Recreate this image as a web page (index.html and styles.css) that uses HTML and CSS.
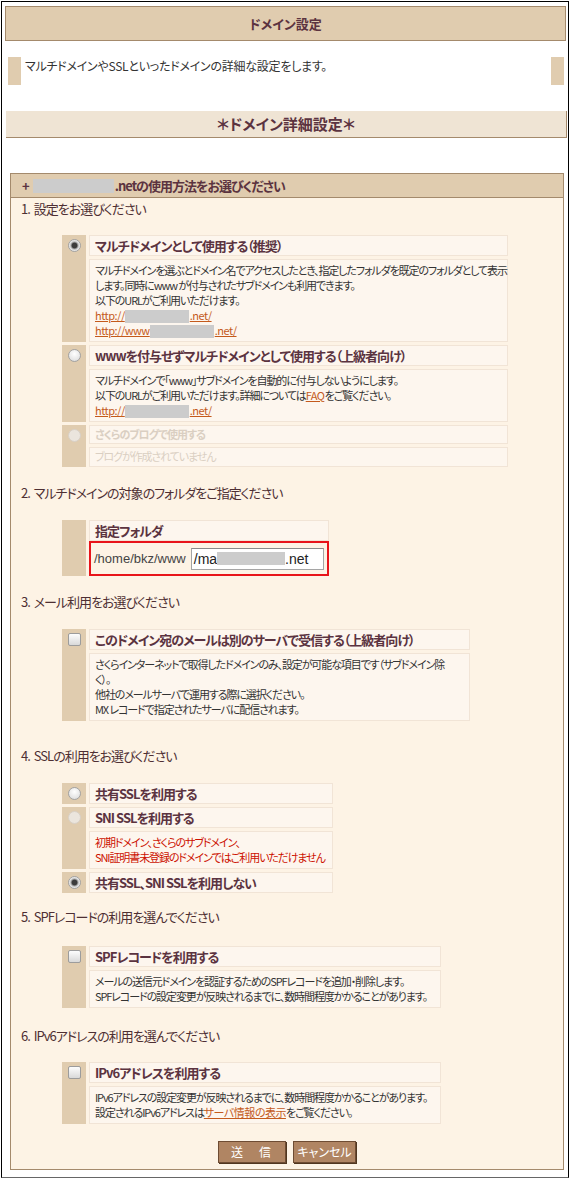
FILE: index.html
```html
<!DOCTYPE html>
<html lang="ja">
<head>
<meta charset="utf-8">
<title>ドメイン設定</title>
<link rel="stylesheet" href="styles.css">
</head>
<body>
<div class="frame">

<h1 class="page-title">ドメイン設定</h1>

<div class="intro">
	<div class="intro-mark"></div>
	<div class="intro-text">マルチドメインやSSLといったドメインの詳細な設定をします。</div>
	<div class="intro-mark"></div>
</div>

<h2 class="subtitle">＊ドメイン詳細設定＊</h2>

<div class="panel">
	<div class="panel-head">+<span class="blank blank-head"></span>.netの使用方法をお選びください</div>

	<!-- 1 -->
	<div class="sec">
		<p class="sec-title first">1. 設定をお選びください</p>
		<div class="opts opts-wide">
			<div class="opt">
				<div class="mark"><span class="radio on"></span></div>
				<div class="cells">
					<div class="ttl">マルチドメインとして使用する（推奨）</div>
					<div class="desc">マルチドメインを選ぶとドメイン名でアクセスしたとき、指定したフォルダを既定のフォルダとして表示<br>
					します。同時にwww が付与されたサブドメインも利用できます。<br>
					以下のURLがご利用いただけます。<br>
					<a href="#">http://<span class="blank blank-url"></span>.net/</a><br>
					<a href="#">http://www<span class="blank blank-url"></span>.net/</a></div>
				</div>
			</div>
			<div class="opt">
				<div class="mark"><span class="radio"></span></div>
				<div class="cells">
					<div class="ttl">wwwを付与せずマルチドメインとして使用する（上級者向け）</div>
					<div class="desc">マルチドメインで「www」サブドメインを自動的に付与しないようにします。<br>
					以下のURLがご利用いただけます。詳細については<a href="#">FAQ</a>をご覧ください。<br>
					<a href="#">http://<span class="blank blank-url"></span>.net/</a></div>
				</div>
			</div>
			<div class="opt">
				<div class="mark"><span class="radio off"></span></div>
				<div class="cells">
					<div class="ttl ttl-off">さくらのブログで使用する</div>
					<div class="desc desc-off">ブログが作成されていません</div>
				</div>
			</div>
		</div>
	</div>

	<!-- 2 -->
	<div class="sec">
		<p class="sec-title">2. マルチドメインの対象のフォルダをご指定ください</p>
		<div class="opts opts-folder">
			<div class="opt">
				<div class="mark"></div>
				<div class="cells cells-tight">
					<div class="ttl">指定フォルダ</div>
					<div class="folder">/home/bkz/www <span class="input">/ma<span class="blank blank-input"></span>.net</span></div>
				</div>
			</div>
		</div>
	</div>

	<!-- 3 -->
	<div class="sec">
		<p class="sec-title">3. メール利用をお選びください</p>
		<div class="opts opts-mail">
			<div class="opt">
				<div class="mark"><span class="check"></span></div>
				<div class="cells">
					<div class="ttl">このドメイン宛のメールは別のサーバで受信する（上級者向け）</div>
					<div class="desc">さくらインターネットで取得したドメインのみ、設定が可能な項目です（サブドメイン除<br>
					く）。<br>
					他社のメールサーバで運用する際に選択ください。<br>
					MX レコードで指定されたサーバに配信されます。</div>
				</div>
			</div>
		</div>
	</div>

	<!-- 4 -->
	<div class="sec">
		<p class="sec-title gap-wide">4. SSLの利用をお選びください</p>
		<div class="opts opts-ssl">
			<div class="opt">
				<div class="mark"><span class="radio"></span></div>
				<div class="cells">
					<div class="ttl">共有SSLを利用する</div>
				</div>
			</div>
			<div class="opt">
				<div class="mark"><span class="radio off"></span></div>
				<div class="cells">
					<div class="ttl">SNI SSLを利用する</div>
					<div class="desc desc-warn">初期ドメイン、さくらのサブドメイン、<br>
					SNI証明書未登録のドメインではご利用いただけません</div>
				</div>
			</div>
			<div class="opt">
				<div class="mark"><span class="radio on"></span></div>
				<div class="cells">
					<div class="ttl">共有SSL、SNI SSLを利用しない</div>
				</div>
			</div>
		</div>
	</div>

	<!-- 5 -->
	<div class="sec">
		<p class="sec-title gap-narrow">5. SPFレコードの利用を選んでください</p>
		<div class="opts opts-spf gap-low">
			<div class="opt">
				<div class="mark"><span class="check"></span></div>
				<div class="cells">
					<div class="ttl">SPFレコードを利用する</div>
					<div class="desc">メールの送信元ドメインを認証するためのSPFレコードを追加・削除します。<br>
					SPFレコードの設定変更が反映されるまでに、数時間程度かかることがあります。</div>
				</div>
			</div>
		</div>
	</div>

	<!-- 6 -->
	<div class="sec">
		<p class="sec-title gap-mid">6. IPv6アドレスの利用を選んでください</p>
		<div class="opts opts-spf gap-first">
			<div class="opt">
				<div class="mark"><span class="check"></span></div>
				<div class="cells">
					<div class="ttl">IPv6アドレスを利用する</div>
					<div class="desc">IPv6アドレスの設定変更が反映されるまでに、数時間程度かかることがあります。<br>
					設定されるIPv6アドレスは<a href="#">サーバ情報の表示</a>をご覧ください。</div>
				</div>
			</div>
		</div>
	</div>

	<div class="actions">
		<button class="btn btn-send">送　信</button>
		<button class="btn btn-cancel">キャンセル</button>
	</div>
</div>

</div>
</body>
</html>
```

FILE: styles.css
```css
body {
	margin: 0;
	font-family: "Noto Sans CJK JP", "Noto Sans", sans-serif;
	font-feature-settings: "palt";
	color: #333;
}
.frame {
	box-sizing: border-box;
	width: 568px;
	height: 1177px;
	margin: 1px 0 0 1px;
	padding: 4px 2px 0 3px;
	border: 1px solid #000;
	border-bottom-color: #666;
	background: #fff;
}
.page-title {
	box-sizing: border-box;
	height: 35px;
	margin: 0;
	border: 1px solid #a48a6c;
	background: #e0ccaf;
	color: #5b3340;
	font-size: 13px;
	font-weight: bold;
	line-height: 33px;
	text-align: center;
}
.intro {
	display: flex;
	height: 28px;
	margin: 16px 2px 0 3px;
	font-size: 12px;
	line-height: 16px;
	letter-spacing: -0.25px;
}
.intro-mark {
	width: 13px;
	background: #e0ccaf;
}
.intro-text {
	flex: 1;
	padding: 1px 4px;
}
.subtitle {
	box-sizing: border-box;
	height: 27px;
	margin: 26px -1px 0 1px;
	border-right: 1px solid #a48a6c;
	border-bottom: 1px solid #a48a6c;
	background: #efe4d4;
	color: #5b3340;
	font-size: 15px;
	font-weight: bold;
	line-height: 26px;
	text-align: center;
}
.panel {
	margin: 35px 2px 0 5px;
	padding-bottom: 6px;
	border: 1px solid #a48a6c;
	background: #fdf3e5;
	letter-spacing: -1px;
}
.panel-head {
	box-sizing: border-box;
	height: 24px;
	padding-left: 11px;
	border-bottom: 1px solid #a48a6c;
	background: #e0ccaf;
	color: #5b3340;
	font-size: 13px;
	font-weight: bold;
	line-height: 23px;
}
.blank {
	display: inline-block;
	background: #cccccc;
	vertical-align: middle;
}
.blank-head {
	width: 81px;
	height: 14px;
	margin: -2px 1px 0 4px;
}
.blank-url {
	width: 64px;
	height: 13px;
	margin: -2px 1px 0 0;
}
.blank-input {
	width: 68px;
	height: 13px;
	margin-top: -2px;
}
.sec {
	padding: 0 10px;
}
.sec-title {
	margin: 16px 0 0;
	color: #4e2f33;
	font-size: 13px;
	line-height: 20px;
	word-spacing: 2px;
}
.sec-title.first {
	margin-top: 1px;
}
.sec-title.gap-wide {
	margin-top: 25px;
}
.sec-title.gap-narrow {
	margin-top: 14px;
}
.sec-title.gap-mid {
	margin-top: 18px;
}
.opts {
	display: flex;
	flex-direction: column;
	gap: 3px;
	margin: 17px 0 0 41px;
}
.opts-wide,
.opts.gap-first {
	margin-top: 16px;
}
.opts.gap-low {
	margin-top: 19px;
}
.opts-wide {
	width: 446px;
}
.opts-folder {
	width: 267px;
}
.opts-mail {
	width: 408px;
}
.opts-ssl {
	width: 271px;
}
.opts-spf {
	width: 379px;
}
.opt {
	display: flex;
	gap: 3px;
}
.mark {
	flex: none;
	display: flex;
	justify-content: center;
	align-items: flex-start;
	width: 24px;
	padding-top: 4px;
	background: #e0ccaf;
}
.cells {
	flex: 1;
	display: flex;
	flex-direction: column;
	gap: 3px;
	min-width: 0;
}
.cells-tight {
	gap: 0;
}
.ttl {
	padding: 0 5px;
	border: 1px solid #f1e4d6;
	background: #fdf6ee;
	color: #5b3340;
	font-size: 13px;
	font-weight: bold;
	line-height: 19px;
	white-space: nowrap;
}
.ttl-off {
	color: #dacfc2;
	font-size: 11px;
	line-height: 17px;
}
.desc {
	padding: 3px 5px;
	border: 1px solid #f1e4d6;
	background: #fdf6ee;
	font-size: 11px;
	line-height: 15px;
	letter-spacing: -1.1px;
	white-space: nowrap;
}
.desc-off {
	padding: 1px 5px 2px;
	color: #dacfc2;
}
.desc-warn {
	color: #cc1100;
}
.desc a {
	color: #c45a1c;
	letter-spacing: -0.5px;
}
.folder {
	box-sizing: border-box;
	display: flex;
	align-items: center;
	height: 35px;
	padding-left: 3px;
	border: 2px solid #e8141a;
	color: #444;
	font-family: "Liberation Sans", Arial, sans-serif;
	font-size: 13px;
	letter-spacing: 0;
}
.input {
	box-sizing: border-box;
	width: 133px;
	height: 22px;
	margin-left: 5px;
	padding: 0 2px;
	border: 1px solid #a5a5a5;
	border-top-color: #8a8a8a;
	background: #fff;
	color: #222;
	font-size: 14px;
	line-height: 20px;
}
.radio {
	box-sizing: border-box;
	width: 13px;
	height: 13px;
	border: 1px solid #a2a2a2;
	border-radius: 50%;
	background: radial-gradient(circle at 50% 35%, #ffffff, #d8d8d8);
}
.radio.on {
	background: radial-gradient(circle, #3c3c3c 0 2.5px, #8c8c8c 3.2px, #cfcfcf 4.2px, #f2f2f2 5.5px);
}
.radio.off {
	border-color: #d8d0c6;
	background: #ebe5dd;
}
.check {
	box-sizing: border-box;
	width: 13px;
	height: 13px;
	border: 1px solid #9c9c9c;
	border-radius: 2px;
	background: linear-gradient(#fdfdfd, #d9d9d9);
}
.actions {
	display: flex;
	justify-content: center;
	gap: 7px;
	margin-top: 17px;
}
.btn {
	height: 22px;
	padding: 0;
	border: 1px solid #6e4c33;
	background: #b08563;
	box-shadow: 1px 1px 0 #50361f;
	color: #fff;
	font-family: "Noto Sans CJK JP", sans-serif;
	font-feature-settings: "palt";
	font-size: 12px;
	line-height: 20px;
}
.btn-send {
	width: 68px;
	letter-spacing: 2px;
}
.btn-cancel {
	width: 63px;
	letter-spacing: 0;
}
```
